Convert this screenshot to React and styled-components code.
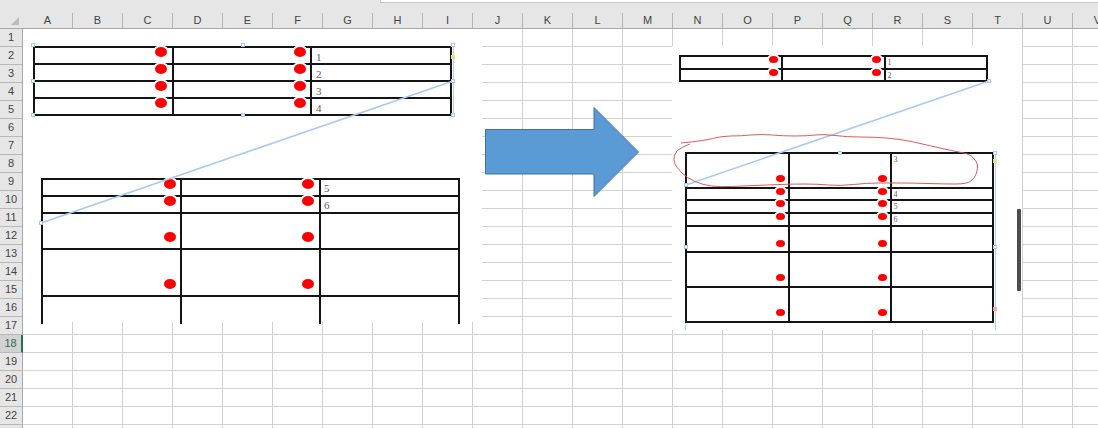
import React from "react";
import styled, { createGlobalStyle } from "styled-components";

const GlobalStyle = createGlobalStyle`
  html, body {
    margin: 0;
    padding: 0;
    background: #fff;
    overflow: hidden;
  }
`;

const COLUMNS = "ABCDEFGHIJKLMNOPQRSTUV".split("");
const ROWS = Array.from({ length: 23 }, (_, i) => i + 1);

// the four pasted pictures of tables, in page pixels
const TABLES = [
  {
    xs: [34, 172.5, 311, 450.5],
    ys: [46.5, 63.5, 80.5, 97.5, 115],
    stroke: 2,
    font: 11,
    pad: 4,
    labels: ["1", "2", "3", "4"],
    dotXs: [161, 300],
    dotYs: [51.5, 69, 86, 103],
    dot: [12, 10],
    halo: true,
  },
  {
    xs: [42, 181, 320, 459],
    ys: [178.5, 195.5, 212.5, 248.5, 295.5, 340],
    clip: 144,
    stroke: 2,
    font: 11,
    pad: 3,
    labels: ["5", "6"],
    dotXs: [169.5, 308],
    dotYs: [183.5, 200.5, 237, 283.5],
    dot: [12, 10],
    halo: [0, 1],
  },
  {
    xs: [680, 782, 884.5, 987],
    ys: [55.5, 68.5, 81],
    stroke: 2,
    font: 8,
    pad: 2,
    labels: ["1", "2"],
    dotXs: [773.5, 876],
    dotYs: [59.5, 72],
    dot: [9, 7],
    halo: true,
  },
  {
    xs: [686, 788.5, 890.5, 993],
    ys: [153, 187.5, 200, 213, 225.5, 252, 286.5, 321.5],
    stroke: 2,
    font: 8,
    pad: 2,
    labels: ["3", "4", "5", "6"],
    dotXs: [780, 882],
    dotYs: [178.5, 191, 203.5, 216.5, 243.5, 277.5, 312.5],
    dot: [9, 7],
    halo: [0, 1, 2, 3],
  },
];

const HANDLES = [
  [33, 45], [243, 45], [453, 45], [33, 81], [453, 81], [33, 115], [243, 115], [453, 115],
  [41, 223], [989, 81], [686, 185],
  [840, 153], [995, 153], [686, 247], [995, 247],
];

// traced from the hand-drawn marker, in page pixels
const SCRIBBLE = [
  [681, 143], [703, 141], [722, 136], [740, 136], [762, 134], [783, 136], [807, 136],
  [823, 134], [847, 137], [873, 137], [900, 139], [927, 145], [953, 151], [970, 154],
  [977, 162], [978, 168], [975, 178], [967, 184], [943, 184], [913, 183], [890, 183],
  [867, 183], [840, 186], [817, 184], [793, 184], [767, 185], [743, 186], [720, 187],
  [703, 185], [687, 178], [677, 168], [673, 160], [676, 150], [690, 144],
];

const smoothPath = (pts) => {
  let d = `M${pts[0][0]} ${pts[0][1]}`;
  for (let i = 1; i < pts.length - 1; i++) {
    const mx = (pts[i][0] + pts[i + 1][0]) / 2;
    const my = (pts[i][1] + pts[i + 1][1]) / 2;
    d += ` Q${pts[i][0]} ${pts[i][1]} ${mx} ${my}`;
  }
  const last = pts[pts.length - 1];
  return `${d} L${last[0]} ${last[1]}`;
};

const gaps = (list) => list.slice(1).map((v, i) => v - list[i]);

const Sheet = styled.div`
  position: relative;
  width: 1098px;
  height: 428px;
  overflow: hidden;
  background: #fff;
  font-family: "Liberation Sans", Arial, sans-serif;
`;

const TopBand = styled.div`
  display: flex;
  height: 13px;
  background: #e6e6e6;
`;

const FormulaBox = styled.div`
  box-sizing: border-box;
  margin-left: 380px;
  flex: 1;
  height: 3px;
  background: #fff;
  border-bottom: 1px solid #c6c6c6;
  border-left: 1px solid #c6c6c6;
`;

const HeaderRow = styled.div`
  display: flex;
  height: 16px;
  box-sizing: border-box;
  background: #e6e6e6;
  border-bottom: 1px solid #a8a8a8;
`;

const Corner = styled.div`
  position: relative;
  width: 23px;
  flex: none;
  &::after {
    content: "";
    position: absolute;
    left: 11px;
    top: 4px;
    width: 8px;
    height: 8px;
    background: #bcbcbc;
    clip-path: polygon(100% 0, 100% 100%, 0 100%);
  }
`;

const ColHead = styled.div`
  width: 50px;
  flex: none;
  box-sizing: border-box;
  border-right: 1px solid #b4b4b4;
  text-align: center;
  font-size: 11px;
  line-height: 15px;
  color: #444;
`;

const Body = styled.div`
  display: flex;
`;

const RowHeads = styled.div`
  width: 23px;
  flex: none;
`;

const RowHead = styled.div`
  height: 18px;
  box-sizing: border-box;
  background: ${(p) => (p.$active ? "#d2d2d2" : "#e6e6e6")};
  border-bottom: 1px solid #b8b8b8;
  border-right: ${(p) => (p.$active ? "2px solid #217346" : "1px solid #a8a8a8")};
  text-align: center;
  font-size: 11px;
  line-height: 17px;
  color: ${(p) => (p.$active ? "#2f6b4a" : "#444")};
`;

const Cells = styled.div`
  flex: 1;
  height: 414px;
  background-image:
    linear-gradient(to right, transparent 49px, #d2d2d2 49px),
    linear-gradient(to bottom, transparent 17px, #d2d2d2 17px);
  background-size: 50px 18px;
`;

const Canvas = styled.div`
  position: absolute;
  inset: 0;
`;

const WhitePatch = styled.div`
  position: absolute;
  left: ${(p) => p.$x}px;
  top: ${(p) => p.$y}px;
  width: ${(p) => p.$w}px;
  height: ${(p) => p.$h}px;
  background: #fff;
`;

const PicTable = styled.div`
  position: absolute;
  display: grid;
  box-sizing: content-box;
  left: ${(p) => p.$x}px;
  top: ${(p) => p.$y}px;
  height: ${(p) => p.$height}px;
  overflow: hidden;
  grid-template-columns: ${(p) => p.$cols};
  grid-template-rows: ${(p) => p.$rows};
  border-left: ${(p) => p.$stroke}px solid #141414;
  border-top: ${(p) => p.$stroke}px solid #141414;
`;

const PicCell = styled.div`
  box-sizing: border-box;
  border-right: ${(p) => p.$stroke}px solid #141414;
  border-bottom: ${(p) => p.$stroke}px solid #141414;
  padding: ${(p) => p.$pad}px 0 0 ${(p) => p.$pad}px;
  font-family: "Liberation Serif", "Times New Roman", serif;
  font-size: ${(p) => p.$font}px;
  line-height: ${(p) => p.$font}px;
  color: #5e5e5e;
`;

const Dot = styled.div`
  position: absolute;
  left: ${(p) => p.$x - p.$w / 2}px;
  top: ${(p) => p.$y - p.$h / 2}px;
  width: ${(p) => p.$w}px;
  height: ${(p) => p.$h}px;
  border-radius: 50%;
  background: #fe0000;
  box-shadow: ${(p) => (p.$halo ? "0 0 0 2px #fff" : "none")};
`;

const Frame = styled.div`
  position: absolute;
  box-sizing: border-box;
  left: ${(p) => p.$x}px;
  top: ${(p) => p.$y}px;
  width: ${(p) => p.$w}px;
  height: ${(p) => p.$h}px;
  border-left: 1px solid #b4cff0;
  border-right: 1px solid #b4cff0;
`;

const Handle = styled.div`
  position: absolute;
  box-sizing: border-box;
  left: ${(p) => p.$x - 2}px;
  top: ${(p) => p.$y - 2}px;
  width: 4px;
  height: 4px;
  background: ${(p) => p.$fill || "#fff"};
  border: 1px solid ${(p) => p.$edge || "#a6c6ec"};
`;

const Drawing = styled.svg`
  position: absolute;
  left: 0;
  top: 0;
`;

const DarkBar = styled.div`
  position: absolute;
  left: 1017px;
  top: 209px;
  width: 4px;
  height: 82px;
  border-radius: 1px;
  background: #4d4d4d;
`;

function TablePicture({ table }) {
  const { xs, ys, stroke, font, pad, labels, clip } = table;
  const cols = gaps(xs).map((v) => `${v}px`).join(" ");
  const rowSizes = gaps(ys);
  const half = stroke / 2;
  return (
    <PicTable
      $x={xs[0] - half}
      $y={ys[0] - half}
      $stroke={stroke}
      $cols={cols}
      $rows={rowSizes.map((v) => `${v}px`).join(" ")}
      $height={clip ?? rowSizes.reduce((a, b) => a + b, 0)}
    >
      {rowSizes.map((_, r) =>
        [0, 1, 2].map((c) => (
          <PicCell key={`${r}-${c}`} $stroke={stroke} $font={font} $pad={pad}>
            {c === 2 ? labels[r] : null}
          </PicCell>
        ))
      )}
    </PicTable>
  );
}

function TableDots({ table }) {
  const { dotXs, dotYs, dot, halo } = table;
  return dotYs.flatMap((y, r) =>
    dotXs.map((x) => (
      <Dot
        key={`${x}-${y}`}
        $x={x}
        $y={y}
        $w={dot[0]}
        $h={dot[1]}
        $halo={halo === true || (Array.isArray(halo) && halo.includes(r))}
      />
    ))
  );
}

export default function App() {
  return (
    <Sheet>
      <GlobalStyle />
      <TopBand>
        <FormulaBox />
      </TopBand>
      <HeaderRow>
        <Corner />
        {COLUMNS.map((c) => (
          <ColHead key={c}>{c}</ColHead>
        ))}
      </HeaderRow>
      <Body>
        <RowHeads>
          {ROWS.map((r) => (
            <RowHead key={r} $active={r === 18}>
              {r < 23 ? r : null}
            </RowHead>
          ))}
        </RowHeads>
        <Cells />
      </Body>

      <Canvas>
        <WhitePatch $x={23} $y={29} $w={459} $h={293} />
        <WhitePatch $x={672} $y={46} $w={350} $h={284} />
        <Frame $x={33} $y={45} $w={421} $h={71} />
        <Frame $x={685} $y={153} $w={311} $h={177} />
        {TABLES.map((t, i) => (
          <TablePicture key={i} table={t} />
        ))}
        {TABLES.map((t, i) => (
          <TableDots key={i} table={t} />
        ))}
        <Drawing width="1098" height="428" viewBox="0 0 1098 428">
          <polygon
            points="485.5,129.5 594,129.5 594,107.5 638.5,152 594,196.5 594,174 485.5,174"
            fill="#5b9bd5"
            stroke="#41719c"
            strokeWidth="1"
          />
          <line x1="453" y1="81" x2="41" y2="223" stroke="#a9c9f0" strokeWidth="1.5" />
          <line x1="989" y1="81" x2="686" y2="185" stroke="#a9c9f0" strokeWidth="1.5" />
          <path d={smoothPath(SCRIBBLE)} fill="none" stroke="#df5a5a" strokeWidth="1" />
        </Drawing>
        {HANDLES.map(([x, y]) => (
          <Handle key={`${x}-${y}`} $x={x} $y={y} />
        ))}
        <Handle $x={453} $y={57} $fill="#e6e27a" $edge="#e6e27a" />
        <Handle $x={995} $y={161} $fill="#e6e27a" $edge="#e6e27a" />
        <Handle $x={995} $y={309} $fill="#f2a6a6" $edge="#f2a6a6" />
        <DarkBar />
      </Canvas>
    </Sheet>
  );
}
